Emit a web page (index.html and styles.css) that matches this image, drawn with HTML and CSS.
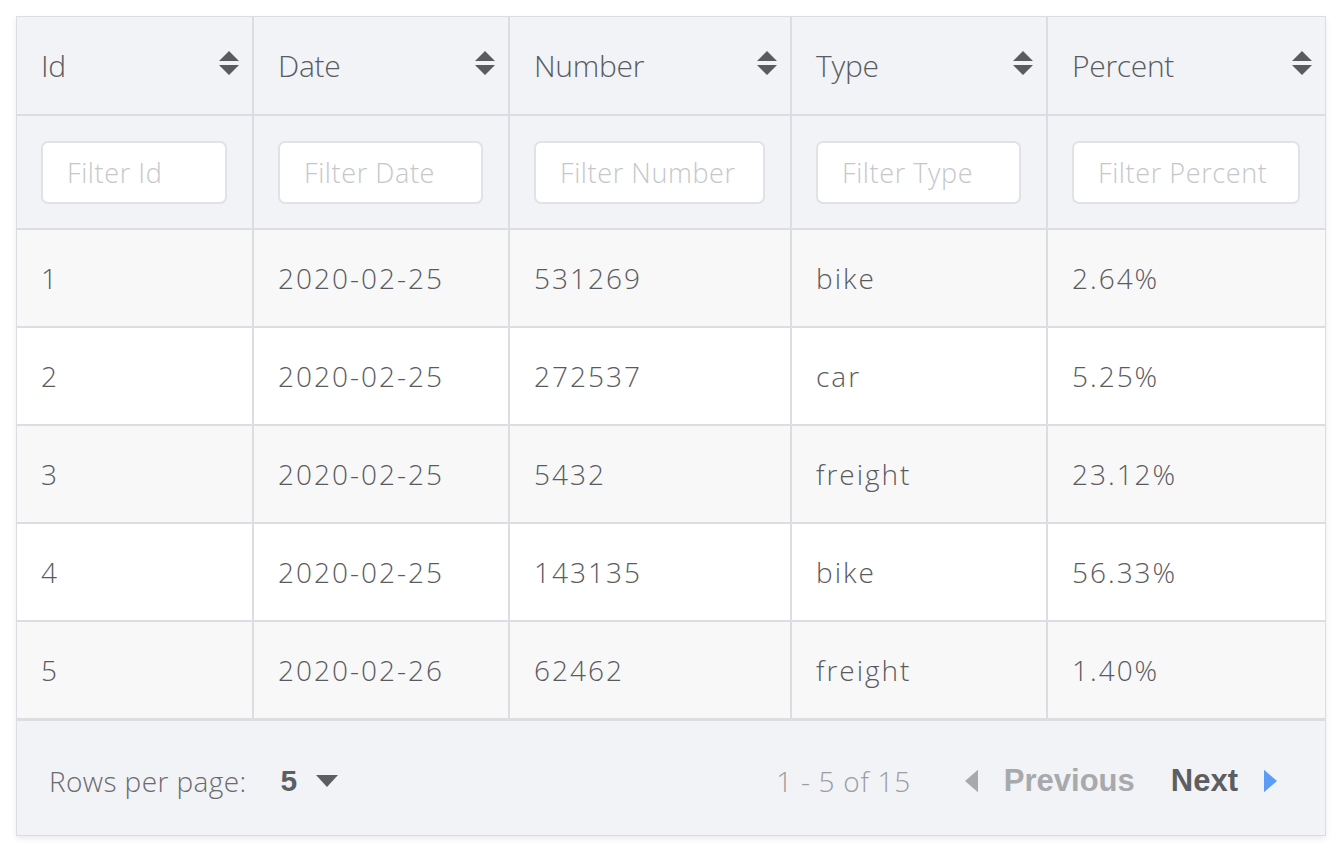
FILE: index.html
```html
<!DOCTYPE html>
<html>
<head>
<meta charset="utf-8">
<link rel="stylesheet" href="styles.css">
</head>
<body>
<div class="grid">
  <table class="tbl">
    <colgroup>
      <col class="c1"><col class="c2"><col class="c3"><col class="c4"><col class="c5">
    </colgroup>
    <thead>
      <tr class="head">
        <th><div class="hcell"><span>Id</span><svg class="sort" viewBox="0 0 22 26"><path d="M11 0 L21 10 L1 10 Z M1 14 L21 14 L11 24 Z"/></svg></div></th>
        <th><div class="hcell"><span>Date</span><svg class="sort" viewBox="0 0 22 26"><path d="M11 0 L21 10 L1 10 Z M1 14 L21 14 L11 24 Z"/></svg></div></th>
        <th><div class="hcell"><span>Number</span><svg class="sort" viewBox="0 0 22 26"><path d="M11 0 L21 10 L1 10 Z M1 14 L21 14 L11 24 Z"/></svg></div></th>
        <th><div class="hcell"><span>Type</span><svg class="sort" viewBox="0 0 22 26"><path d="M11 0 L21 10 L1 10 Z M1 14 L21 14 L11 24 Z"/></svg></div></th>
        <th><div class="hcell"><span>Percent</span><svg class="sort" viewBox="0 0 22 26"><path d="M11 0 L21 10 L1 10 Z M1 14 L21 14 L11 24 Z"/></svg></div></th>
      </tr>
      <tr class="filters">
        <th><input class="filter" placeholder="Filter Id"></th>
        <th><input class="filter" placeholder="Filter Date"></th>
        <th><input class="filter" placeholder="Filter Number"></th>
        <th><input class="filter" placeholder="Filter Type"></th>
        <th><input class="filter" placeholder="Filter Percent"></th>
      </tr>
    </thead>
    <tbody>
      <tr class="odd"><td>1</td><td>2020-02-25</td><td>531269</td><td>bike</td><td>2.64%</td></tr>
      <tr><td>2</td><td>2020-02-25</td><td>272537</td><td>car</td><td>5.25%</td></tr>
      <tr class="odd"><td>3</td><td>2020-02-25</td><td>5432</td><td>freight</td><td>23.12%</td></tr>
      <tr><td>4</td><td>2020-02-25</td><td>143135</td><td>bike</td><td>56.33%</td></tr>
      <tr class="odd"><td>5</td><td>2020-02-26</td><td>62462</td><td>freight</td><td>1.40%</td></tr>
    </tbody>
  </table>
  <div class="footer">
    <div class="rpp">
      <span class="rpp-label">Rows per page:</span>
      <span class="rpp-value">5</span>
      <svg class="caret" viewBox="0 0 22 12"><path d="M0 0 L22 0 L11 12 Z"/></svg>
    </div>
    <div class="pager">
      <span class="range">1 - 5 of 15</span>
      <span class="btn disabled"><svg class="arrow" viewBox="0 0 14 24"><path d="M14 0 L14 24 L0 12 Z"/></svg>Previous</span>
      <span class="btn active">Next<svg class="arrow blue" viewBox="0 0 14 24"><path d="M0 0 L14 12 L0 24 Z"/></svg></span>
    </div>
  </div>
</div>
</body>
</html>
```

FILE: styles.css
```css
html, body {
  margin: 0;
  padding: 0;
  background: #ffffff;
}
body {
  padding: 16px;
  font-family: "Open Sans", "Noto Sans", sans-serif;
  color: #58595d;
}
.grid {
  width: 1310px;
  border: 1px solid #dcdde2;
  box-shadow: 0 3px 6px rgba(0,0,0,0.08);
  box-sizing: border-box;
}
.tbl {
  width: 100%;
  border-collapse: collapse;
  table-layout: fixed;
}
.c1 { width: 236px; }
.c2 { width: 256px; }
.c3 { width: 282px; }
.c4 { width: 256px; }
.c5 { width: auto; }
.tbl th, .tbl td {
  border: 2px solid #dcdde2;
  padding: 0 25px 0 24px;
  text-align: left;
}
.tbl tr > :first-child { border-left: none; }
.tbl tr > :last-child { border-right: none; }
.tbl thead tr:first-child th { border-top: none; }
.head th {
  background: #f2f3f6;
  height: 97px;
  padding-right: 12px;
  font-weight: 300;
}
.hcell {
  display: flex;
  align-items: center;
  justify-content: space-between;
}
.hcell span {
  font-size: 30px;
  font-weight: 300;
  color: #5a5b5f;
  letter-spacing: -0.3px;
}
.sort {
  width: 22px;
  height: 26px;
  fill: #5a5b5f;
  margin-top: -4px;
}
.filters th {
  background: #f2f3f6;
  height: 112px;
}
.filter {
  display: block;
  width: 100%;
  height: 63px;
  box-sizing: border-box;
  border: 2px solid #e1e2e6;
  border-radius: 7px;
  background: #ffffff;
  padding: 0 24px;
  font-family: "Open Sans", "Noto Sans", sans-serif;
  font-size: 27px;
  font-weight: 300;
  letter-spacing: 0.6px;
  outline: none;
}
.filter::placeholder {
  color: #c6c7ca;
}
.tbl td {
  height: 96px;
  font-size: 28px;
  font-weight: 300;
  color: #5a5b5f;
  letter-spacing: 2px;
  background: #ffffff;
}
.tbl tr.odd td {
  background: #f8f8f8;
}
.tbl tbody tr:last-child td {
  border-bottom: none;
}
.footer {
  border-top: 3px solid #dcdde2;
  background: #f2f3f6;
  height: 117px;
  display: flex;
  align-items: center;
  justify-content: space-between;
  padding: 6px 48px 0 32px;
  box-sizing: border-box;
}
.rpp {
  display: flex;
  align-items: center;
}
.rpp-label {
  font-size: 28px;
  font-weight: 300;
  letter-spacing: 0.4px;
  color: #6a6b6f;
}
.rpp-value {
  margin-left: 34px;
  font-family: "Liberation Sans", Arial, sans-serif;
  font-weight: 700;
  font-size: 30px;
  color: #5d5e62;
}
.caret {
  width: 22px;
  height: 12px;
  margin-left: 19px;
  fill: #5d5e62;
}
.pager {
  display: flex;
  align-items: center;
}
.range {
  font-size: 28px;
  font-weight: 300;
  letter-spacing: 0.7px;
  color: #9c9da1;
  margin-right: 54px;
}
.btn {
  display: flex;
  align-items: center;
  font-family: "Liberation Sans", Arial, sans-serif;
  font-weight: 700;
  font-size: 31px;
}
.btn.disabled {
  color: #a8a9ad;
}
.btn.disabled .arrow {
  fill: #a8a9ad;
  margin-right: 26px;
}
.btn.active {
  color: #5d5e62;
  margin-left: 36px;
}
.btn.active .arrow {
  fill: #5a9cf6;
  margin-left: 26px;
}
.arrow {
  width: 13px;
  height: 24px;
}
```
